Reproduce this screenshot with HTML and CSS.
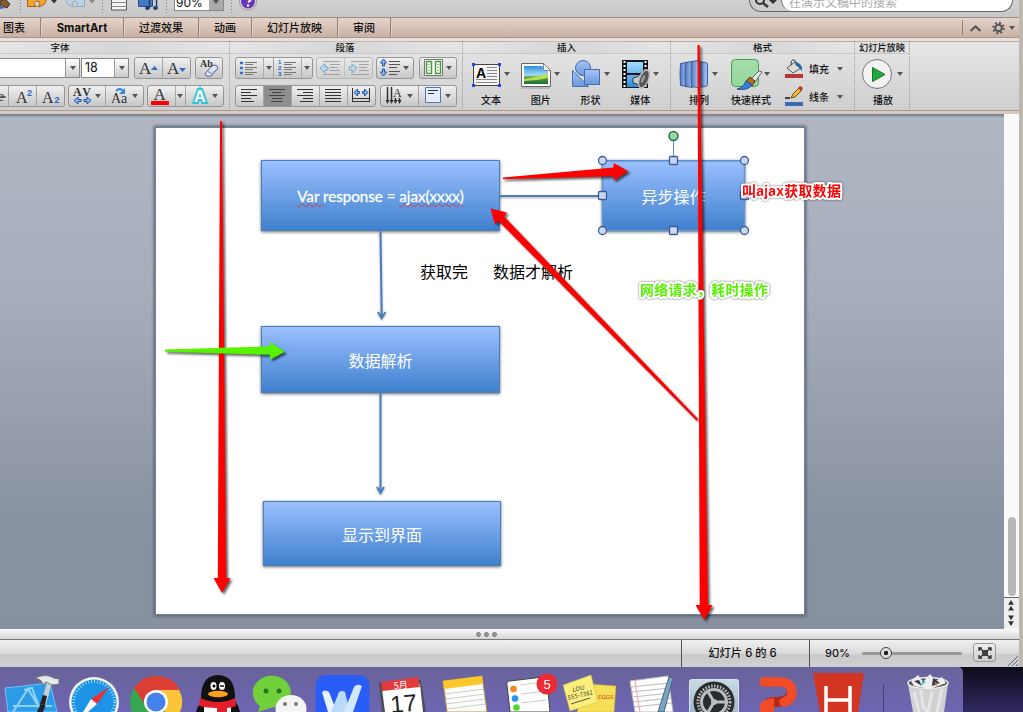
FILE: index.html
```html
<!DOCTYPE html>
<html lang="zh-CN">
<head>
<meta charset="utf-8">
<title>演示文稿</title>
<link rel="stylesheet" href="styles.css">
</head>
<body>
<svg class="defs" width="0" height="0">
  <defs>
    <linearGradient id="blue" x1="0" y1="0" x2="0" y2="1"><stop offset="0" stop-color="#a5c4f5"/><stop offset="1" stop-color="#6b97dc"/></linearGradient>
    <linearGradient id="film" x1="0" y1="0" x2="0" y2="1"><stop offset="0" stop-color="#a5dcfa"/><stop offset="1" stop-color="#2d8ee0"/></linearGradient>
    <linearGradient id="sky" x1="0" y1="0" x2="0" y2="1"><stop offset="0" stop-color="#2a8ee0"/><stop offset=".5" stop-color="#a8dcf5"/><stop offset=".65" stop-color="#4a9a3c"/><stop offset="1" stop-color="#1f6f38"/></linearGradient>
    <linearGradient id="green" x1="0" y1="0" x2="0" y2="1"><stop offset="0" stop-color="#a5deaa"/><stop offset="1" stop-color="#92d79a"/></linearGradient>
    <linearGradient id="steel" x1="0" y1="0" x2="0" y2="1"><stop offset="0" stop-color="#c8dbe5"/><stop offset="1" stop-color="#8fa6b3"/></linearGradient>
    <linearGradient id="bars" x1="0" y1="0" x2="1" y2="0"><stop offset="0" stop-color="#4c74be"/><stop offset="1" stop-color="#a9c6f4"/></linearGradient>
  </defs>
</svg>
<div class="window">
  <div class="toolbar">
    <svg class="tools" width="174" height="17" viewBox="0 0 174 17">
      <path d="M0 1l5-2 5 5-3 4-7-3z" fill="#8a5a2a" stroke="#333"/><path d="M0 6l5 2-5 1z" fill="#3b61b5"/>
      <path d="M27.500-1v7.500h9l-3-3q3-4 5.500-2t-1 5.500q9-2 8-8z" fill="#f4a62a" stroke="#a95b10"/>
      <path d="M51 0h6l-3 3.500z" fill="#333"/>
      <path d="M84.500-1v7.500h-9l3-3q-3-4-5.500-2t1 5.500q-9-2-8-8z" fill="#bcd3e6" stroke="#8faabd"/>
      <path d="M89 0h6l-3 3.500z" fill="#888"/>
      <path d="M111.500-1h15v11h-15z" fill="#f4f4f4" stroke="#555"/><path d="M111 2.500h16M111 6.500h16" stroke="#888"/>
      <path d="M138.500-1h14v7.500h-14z" fill="#4379c4" stroke="#244a86"/><path d="M149.500-1v9m7-9v9" stroke="#23406f" stroke-width="1.500"/><ellipse cx="147.500" cy="8" rx="2.500" ry="2" fill="#23406f"/><ellipse cx="155.500" cy="8" rx="2.500" ry="2" fill="#23406f"/>
      <path d="M20.500 0v15M102.500 0v15M166.500 0v15" stroke="#888" stroke-dasharray="1 2"/>
    </svg>
    <div class="zoombox"><span class="zoomval">90%</span><span class="zoombtn"><i class="caret"></i></span></div>
    <svg class="help" width="38" height="17" viewBox="224 0 38 17"><path d="M231.500 0v15" stroke="#888" stroke-dasharray="1 2"/><circle cx="248" cy="1.500" r="8.500" fill="#ddd" stroke="#999"/><circle cx="248" cy="1.500" r="7" fill="#6a35bd"/><path d="M246-1q2-3 4-1t-2 4" stroke="#fff" stroke-width="2" fill="none"/><circle cx="248" cy="5.500" r="1.200" fill="#fff"/></svg>
    <div class="search"><svg width="31" height="12" viewBox="750 0 31 12"><circle cx="760" cy="0" r="4" fill="none" stroke="#333" stroke-width="2"/><path d="M763 3l5 4" stroke="#333" stroke-width="2.500"/><path d="M769 0h8l-4 4z" fill="#333"/></svg><span class="field">在演示文稿中的搜索</span></div>
  </div>
  <div class="tabs">
    <span class="tab t1">图表</span><span class="tab t2">SmartArt</span><span class="tab t3">过渡效果</span><span class="tab t4">动画</span><span class="tab t5">幻灯片放映</span><span class="tab t6">审阅</span>
    <svg class="tabtools" width="57" height="19" viewBox="962 18 57 19"><path d="M962.500 20v15" stroke="#907f77"/><path d="M970.500 31l5-4.500 5 4.500" fill="none" stroke="#555" stroke-width="2.200"/><circle cx="998.500" cy="28" r="3.300" fill="none" stroke="#555" stroke-width="2"/><circle cx="998.500" cy="28" r="5.200" fill="none" stroke="#555" stroke-width="2" stroke-dasharray="2 2.080"/><path d="M1009 26h6l-3 4z" fill="#555"/></svg>
  </div>
  <div class="ribbon">
    <div class="group font">
      <div class="title">字体</div>
      <div class="row">
        <div class="combo name"><span class="val"></span><span class="drop"><i class="caret"></i></span></div>
        <div class="combo size"><span class="val">18</span><span class="drop"><i class="caret"></i></span></div>
        <div class="seg g1">
          <span class="btn w28"><svg width="26" height="20" viewBox="0 0 26 20"><text class="serif" x="4" y="16" font-size="17">A</text><path d="M16 12h7l-3.500-4z" fill="#2e6ec7"/></svg></span>
          <span class="btn w28"><svg width="26" height="20" viewBox="0 0 26 20"><text class="serif" x="4" y="16" font-size="17">A</text><path d="M16 10h7l-3.500 4z" fill="#2e6ec7"/></svg></span>
        </div>
        <div class="seg g2"><span class="btn w28"><svg width="26" height="20" viewBox="0 0 26 20"><text class="serif" x="4" y="9" font-size="10" font-weight="bold">Ab</text><path d="M10 14.500l6-6.500q3-2 5 0t0 4l-6 6q-3 1-5-.5t0-3z" fill="#dfe5fa" stroke="#525b83"/><path d="M12 13.500l4 2.500 5-5" fill="none" stroke="#98a4d1" stroke-width="1.500"/></svg></span></div>
      </div>
      <div class="row second">
        <div class="seg flat"><span class="btn w9"><svg width="8" height="20" viewBox="0 0 8 20"><text class="serif" x="-2" y="15" font-size="14">e</text><path d="M0 11h6" stroke="#222"/></svg></span>
          <span class="btn w28"><svg width="26" height="20" viewBox="0 0 26 20"><text class="serif" x="7" y="17" font-size="16">A</text><text class="idx" x="18" y="10">2</text></svg></span>
          <span class="btn w28"><svg width="26" height="20" viewBox="0 0 26 20"><text class="serif" x="5" y="17" font-size="16">A</text><text class="idx" x="17.500" y="17">2</text></svg></span></div>
        <div class="seg g3">
          <span class="btn w38"><svg width="26" height="20" viewBox="0 0 26 20"><text class="serif" x="4" y="10" font-size="12" font-weight="bold" textLength="18">AV</text><path d="M5 14.500l4-3.500v2.500h3v2H9V18zM22 14.500L18 11v2.500h-3v2h3V18z" fill="#86b8f5" stroke="#2455a4"/></svg><i class="caret"></i></span>
          <span class="btn w38"><svg width="26" height="20" viewBox="0 0 26 20"><text class="serif" x="5" y="17" font-size="14">Aa</text><path d="M10 5q4-4 7 0" fill="none" stroke="#3985d6" stroke-width="2"/><path d="M19 2v6h-6z" fill="#3985d6"/></svg><i class="caret"></i></span>
        </div>
        <div class="seg g4">
          <span class="btn w28"><svg width="26" height="20" viewBox="0 0 26 20"><text class="serif" x="5.500" y="14" font-size="17">A</text><path d="M3 15h18v4H3z" fill="#f00"/></svg></span><span class="btn w10"><i class="caret"></i></span>
          <span class="btn w38"><svg width="26" height="20" viewBox="0 0 26 20"><text class="glow" x="8" y="16">A</text></svg><i class="caret"></i></span>
        </div>
      </div>
    </div>
    <div class="group para">
      <div class="title">段落</div>
      <div class="row">
        <div class="seg">
          <span class="btn w28"><svg width="26" height="20" viewBox="0 0 26 20"><path d="M4 5h3M4 10h3M4 15h3" stroke="#2e73d4" stroke-width="2.500"/><path d="M9 4.500h12M9 9.500h12M9 14.500h12M9 6.500h8M9 11.500h8M9 16.500h8" stroke="#777"/></svg></span><span class="btn w10"><i class="caret"></i></span>
          <span class="btn w28"><svg width="26" height="20" viewBox="0 0 26 20"><text class="nums" x="4" y="6">1</text><text class="nums" x="4" y="12">2</text><text class="nums" x="4" y="18">3</text><path d="M10 4.500h12M10 9.500h12M10 14.500h12M10 6.500h8M10 11.500h8M10 16.500h8" stroke="#777"/></svg></span><span class="btn w10"><i class="caret"></i></span>
        </div>
        <div class="seg g5 faded">
          <span class="btn w28"><svg width="26" height="20" viewBox="0 0 26 20"><path d="M3 10l5-4v3h3v3H8v3z" fill="#9fd6f7" stroke="#1f70b4"/><path d="M6 3.500h17M13 6.500h10M13 9.500h8M13 12.500h10M6 16.500h17" stroke="#666"/></svg></span>
          <span class="btn w28"><svg width="26" height="20" viewBox="0 0 26 20"><path d="M12 10L7 6v3H4v3h3v3z" fill="#9fd6f7" stroke="#1f70b4"/><path d="M6 3.500h18M14 6.500h10M14 9.500h8M14 12.500h10M6 16.500h18" stroke="#666"/></svg></span>
        </div>
        <div class="seg g6"><span class="btn w38"><svg width="26" height="20" viewBox="0 0 26 20"><path d="M6.500 1l3 4h-2v3h-2V5h-2zM6.500 18l3-4h-2v-3h-2v3h-2z" fill="#86b8f5" stroke="#2455a4"/><path d="M12 3.500h11M12 6.500h11M12 9.500h8M12 13.500h11M12 16.500h8" stroke="#555"/></svg><i class="caret"></i></span></div>
        <div class="seg g7"><span class="btn w38"><svg width="26" height="20" viewBox="0 0 26 20"><path d="M4.500 1.500h18v16h-18z" fill="#fff" stroke="#777"/><path d="M6.500 3.500h5v12h-5zM15.500 3.500h5v12h-5z" fill="#fff" stroke="#4a9c3b" stroke-width="1.500"/><path d="M8 6.500h2M8 9.500h2M8 12.500h2M17 6.500h2M17 9.500h2M17 12.500h2" stroke="#aaa"/></svg><i class="caret"></i></span></div>
      </div>
      <div class="row second">
        <div class="seg">
          <span class="btn w28"><svg width="26" height="20" viewBox="0 0 26 20"><path d="M5 3.500h16M5 6.500h10M5 9.500h16M5 12.500h10M5 15.500h13" stroke="#333"/></svg></span>
          <span class="btn w28 on"><svg width="26" height="20" viewBox="0 0 26 20"><path d="M5 3.500h16M8 6.500h10M5 9.500h16M8 12.500h10M7 15.500h12" stroke="#444"/></svg></span>
          <span class="btn w28"><svg width="26" height="20" viewBox="0 0 26 20"><path d="M5 3.500h16M11 6.500h10M5 9.500h16M11 12.500h10M8 15.500h13" stroke="#333"/></svg></span>
          <span class="btn w28"><svg width="26" height="20" viewBox="0 0 26 20"><path d="M5 3.500h16M5 6.500h16M5 9.500h16M5 12.500h16M5 15.500h16" stroke="#333"/></svg></span>
          <span class="btn w28"><svg width="26" height="20" viewBox="0 0 26 20"><path d="M4.500 2v14M21.500 2v14M5 12.500h16M5 15.500h16" stroke="#333"/><path d="M6 6.500L9.500 3v2.500h2v2h-2V10zM20 6.500L16.500 3v2.500h-2v2h2V10z" fill="#78adf0" stroke="#2455a4"/></svg></span>
        </div>
        <div class="seg g8">
          <span class="btn w38"><svg width="26" height="20" viewBox="0 0 26 20"><path d="M6.500 1v13M10.500 1v13M14.500 12v3M18.500 12v3" stroke="#333" stroke-width="1.500"/><path d="M4.500 14h4l-2 4zM8.500 14h4l-2 4zM12.500 14h4l-2 4zM16.500 14h4l-2 4z" fill="#333"/><text class="serif" x="12" y="11" font-size="12">A</text></svg><i class="caret"></i></span>
          <span class="btn w38"><svg width="26" height="20" viewBox="0 0 26 20"><path d="M6.500 1.500h15v15h-15z" fill="#e2edff" stroke="#5375b5"/><path d="M9 4.500h10M9 7.500h6" stroke="#333"/></svg><i class="caret"></i></span>
        </div>
      </div>
    </div>
    <div class="group insert">
      <div class="title">插入</div>
      <div class="bigs">
        <div class="big"><div class="pic"><svg width="32" height="34" viewBox="471 57 32 34"><path d="M473.500 64.500h26v21h-26z" fill="#f4f4f4" stroke="#444"/><text class="box-a" x="476" y="78">A</text><path d="M487 67.500h10M487 70.500h10M487 73.500h10M487 76.500h10M476 79.500h21M476 82.500h21" stroke="#888"/><path d="M472 63h3v3h-3zM498 63h3v3h-3zM472 84h3v3h-3zM498 84h3v3h-3z" fill="#2445ef"/></svg><i class="caret"></i></div><span>文本</span></div>
        <div class="big"><div class="pic"><svg width="32" height="34" viewBox="521 57 32 34"><path d="M521.500 63.500h22l7 7v16h-29z" fill="#fff" stroke="#666"/><path d="M524 66h18l6 6v12h-24z" fill="url(#sky)"/><path d="M524 79q12-2 24-5v4q-12 3-24 3z" fill="#b9dd4b"/><path d="M543.500 63.500v7h7z" fill="#eee" stroke="#888"/><path d="M521 88h29" stroke="#999"/></svg><i class="caret"></i></div><span>图片</span></div>
        <div class="big"><div class="pic"><svg width="32" height="34" viewBox="571 57 32 34"><path d="M572.500 70.500v16h16z" fill="url(#blue)" stroke="#446fae"/><circle cx="583" cy="68" r="7.500" fill="url(#blue)" stroke="#446fae"/><path d="M584.500 69.500h15v15h-15z" fill="url(#blue)" stroke="#446fae"/></svg><i class="caret"></i></div><span>形状</span></div>
        <div class="big"><div class="pic"><svg width="32" height="34" viewBox="621 57 32 34"><path d="M623 60h26v28h-26z" fill="#151515"/><path d="M628 62h16v11h-16zM628 75h16v12h-16z" fill="url(#film)"/><path d="M625.500 61v27M646.500 61v27" stroke="#fff" stroke-width="2" stroke-dasharray="2 2"/><path d="M634 78l4-1 8-7 2 1-5 17-5-4-4-1z" fill="#ccc" stroke="#333"/><ellipse cx="645" cy="79" rx="4.500" ry="9.500" transform="rotate(22 645 79)" fill="#555" stroke="#bbb" stroke-width="1.500"/><ellipse cx="644" cy="79" rx="1.500" ry="4" fill="#999" transform="rotate(22 644 79)"/></svg><i class="caret"></i></div><span>媒体</span></div>
      </div>
    </div>
    <div class="group format">
      <div class="title">格式</div>
      <div class="bigs">
        <div class="big arrange"><div class="pic"><svg width="32" height="34" viewBox="679 57 32 34"><g fill="url(#bars)" stroke="#3a5c9f"><path d="M680.500 63.500q-1 10 0 22l6 1v-24z"/><path d="M685.500 62.500q-1 11 0 24l7 1v-26z"/><path d="M691.500 61.500q-1 12 0 25l7 1v-27z"/><path d="M698.500 61.500l7 1q2 0 2 2v20q0 2-2 2l-7 1z"/></g></svg><i class="caret"></i></div><span>排列</span></div>
        <div class="big quick"><div class="pic"><svg width="33" height="34" viewBox="730 57 33 34"><rect x="731.500" y="59.500" width="27" height="27" rx="4" fill="url(#green)" stroke="#4a985a"/><path d="M751 79l8-8 3 1-7 10z" fill="#e8e8e8" stroke="#666"/><path d="M750 77l5 4-3 5-6-5z" fill="#b86a24" stroke="#573313"/><path d="M746 81l6 4q-4 6-15 4 6-1 9-8z" fill="#397fd8" stroke="#245087"/></svg><i class="caret"></i></div><span>快速样式</span></div>
        <div class="lines">
          <div class="line"><svg width="20" height="21" viewBox="785 58 20 21"><path d="M787 68l8-6 6 6-8 5z" fill="#ddd" stroke="#555"/><path d="M791 65q0-6 3-5t3 6" fill="none" stroke="#333"/><path d="M796 62q7 2 6 9l-3-3-4-4z" fill="#2469a7"/><path d="M785 74h18v4h-18z" fill="#b5383d"/></svg><span>填充</span><i class="caret"></i></div>
          <div class="line"><svg width="20" height="21" viewBox="785 86 20 21"><path d="M785 98h5" stroke="#111" stroke-width="1.500"/><path d="M791 98l2-4 6-6 3 2-7 7z" fill="#f3bb34" stroke="#704914"/><path d="M798 88l2-2 3 2-2 3z" fill="#c8292a"/><path d="M785 102h18v4h-18z" fill="#3f69b0"/></svg><span>线条</span><i class="caret"></i></div>
        </div>
      </div>
    </div>
    <div class="group show">
      <div class="title">幻灯片放映</div>
      <div class="bigs"><div class="big play"><div class="pic"><svg width="34" height="34" viewBox="861 57 34 34"><circle cx="877" cy="74" r="14.500" fill="#f2f2f2" stroke="#777"/><path d="M872.500 67.500v14l12.500-7z" fill="#25a83b" stroke="#14752a"/></svg><i class="caret"></i></div><span>播放</span></div></div>
    </div>
  </div>
  <div class="work">
    <div class="canvas">
      <div class="slide">
        <div class="node n1"><span><u>Var </u>response = <u>ajax(xxxx)</u></span></div>
        <div class="node n2">数据解析</div>
        <div class="node n3">显示到界面</div>
        <div class="node n4">异步操作</div>
        <div class="note first">获取完</div><div class="note next">数据才解析</div>
      </div>
    </div>
    <div class="scroll"><div class="thumb"></div><svg class="pager" width="15" height="31" viewBox="0 0 15 31"><path d="M4 7l3-5 3 5zM4 13l3-5 3 5zM4 18l3 5 3-5zM4 24l3 5 3-5z" fill="#333"/></svg></div>
  </div>
  <div class="splitter"><i></i><i></i><i></i></div>
  <div class="status"><span class="notes"></span><span class="pages">幻灯片 6 的 6</span><span class="pct">90%</span><span class="slider"><i></i></span><span class="fit"><svg width="16" height="14" viewBox="0 0 16 14"><path d="M5 4h6v6H5z" fill="#444"/><path d="M2 5V2h3M2 2l4 3M14 5V2h-3M14 2l-4 3M2 9v3h3M2 12l4-3M14 9v3h-3M14 12l-4-3" fill="none" stroke="#333" stroke-width="1.300"/></svg></span><svg class="grip" width="12" height="12" viewBox="0 0 12 12"><path d="M1 11L11 1M5 11l6-6M9 11l2-2" stroke="#666"/></svg></div>
</div>
<div class="desk">
<div class="dock">
  <svg width="64" height="45" viewBox="0 667 64 45"><path d="M5 688l45-5 7 29H8z" fill="#2c9ce9" stroke="#68c5fa"/><path d="M13 712l15-23 14 23M13 706h39M24 690l8-2 9 24" fill="none" stroke="#8dd3fb" stroke-width="2"/><path d="M41 703l5 1-3 8h-6z" fill="#222"/><path d="M41 704l6-22h5l-6 23z" fill="#c9d0d3"/><path d="M40 704l5 1 2-9-4-1z" fill="#222"/><path d="M35 678q11-5 19 0l5 1v5l-7 1-6-3-3 3q0-5-8-7z" fill="#e4e9ea" stroke="#777"/></svg>
  <svg width="60" height="45" viewBox="64 667 60 45"><circle cx="94" cy="702" r="25" fill="#f4f6f8"/><circle cx="94" cy="702" r="22.500" fill="#1d93e5"/><circle cx="94" cy="702" r="20.500" fill="none" stroke="#9bd9ff" stroke-width="3" stroke-dasharray="1 2"/><path d="M109 687l-12 17-6-5z" fill="#ed2f31"/><path d="M91 699l6 5-9 8h-5z" fill="#f7f7f7"/></svg>
  <svg width="64" height="45" viewBox="124 667 64 45"><circle cx="156" cy="702" r="26" fill="#36a852"/><path d="M134 688q8-12 22-12 17 0 24 14h-24q-10 1-12 13z" fill="#dc3d35"/><path d="M158 690h21q6 11 1 22h-15z" fill="#fbc439"/><circle cx="156" cy="702" r="12" fill="#fff"/><circle cx="156" cy="702" r="9.500" fill="#4582ec"/></svg>
  <svg width="59" height="45" viewBox="188 667 59 45"><path d="M201 702q-4 5-5 10h44q-1-6-5-11 1-26-17-26t-17 27z" fill="#111"/><path d="M204 707h27v5h-27z" fill="#fff"/><path d="M200 698q18 8 35 0l1 8q-5 2-9 2v4h-10v-4q-10 0-18-2z" fill="#e51e2c"/><ellipse cx="213.500" cy="686" rx="3" ry="4" fill="#fff"/><ellipse cx="222" cy="686" rx="3" ry="4" fill="#fff"/><circle cx="214" cy="686" r="1.500"/><path d="M220 686h4" stroke="#111" stroke-width="1.500"/><ellipse cx="218" cy="694" rx="10" ry="3.200" fill="#f9a21a"/></svg>
  <svg width="64" height="45" viewBox="247 667 64 45"><path d="M258 712l2-6a19 17 0 1 1 27-3z" fill="#72d13b"/><ellipse cx="291" cy="709" rx="15.500" ry="14" fill="#f4f4f4"/><g fill="#267325"><circle cx="266" cy="691" r="2.500"/><circle cx="279" cy="691" r="2.500"/></g><g fill="#777"><circle cx="285" cy="704" r="2"/><circle cx="296" cy="704" r="2"/></g></svg>
  <svg width="63" height="45" viewBox="311 667 63 45"><rect x="315.500" y="675" width="54" height="54" rx="10" fill="#2a5cf6"/><path d="M322 692q3-3 7 0l8 20h-9z" fill="#e7f3ff"/><path d="M339 692q3-2 6 0l5 20h-19z" fill="#b9daf8"/><path d="M354 687q3-4 8-1l-9 26h-9z" fill="#d3e8fc"/></svg>
  <svg width="60" height="45" viewBox="374 667 60 45"><path d="M379 683l38-5 4 3 5 31h-44z" fill="#4a4e57"/><path d="M382 689l38-5 3 28h-38z" fill="#fff"/><path d="M381 682l37-5 2 10-38 4z" fill="#e23b3b"/><text class="month" x="394" y="689" transform="rotate(-5 394 689)">5月</text><text class="day" x="391" y="713" transform="rotate(-5 391 713)">17</text></svg>
  <svg width="63" height="45" viewBox="434 667 63 45"><path d="M443 681l39-5 5 36h-40z" fill="#fdfdfb" stroke="#aa9448"/><path d="M443 681l39-5 1 8-39 5z" fill="#fdc62b"/><path d="M445 694l39-5M446 699l39-5M446 704l39-5M447 709l39-5" stroke="#ccc"/></svg>
  <svg width="60" height="45" viewBox="497 667 60 45"><path d="M507 685q-1-4 3-4l33-4q3 0 4 3l3 32h-40z" fill="#fff" stroke="#444"/><circle cx="513.500" cy="689" r="3.300" fill="#fa8325"/><circle cx="515" cy="698.500" r="3.300" fill="#2696f4"/><circle cx="516.500" cy="707.500" r="3.300" fill="#50d62d"/><path d="M520 685l23-3M521 694l24-3M521 703l25-3" stroke="#ccc"/><circle cx="547" cy="684" r="10.500" fill="#ed2934"/><text class="badge" x="547" y="688.500" text-anchor="middle">5</text></svg>
  <svg width="67" height="45" viewBox="557 667 67 45"><path d="M587 684l29 2-2 26h-37z" fill="#f6df54" stroke="#cdb43c" stroke-width=".5"/><path d="M563 685l28-10 7 27-28 9z" fill="#fbee7b" stroke="#c7ba47" stroke-width=".5"/><text class="hand" x="573" y="692" transform="rotate(-13 573 692)" font-size="5">LOU</text><text class="hand" x="568" y="700" transform="rotate(-13 568 700)" textLength="26" lengthAdjust="spacingAndGlyphs">555-7361</text><path d="M571 704l19-6" stroke="#555"/><text class="hand eggs" x="598" y="699">EGGS</text></svg>
  <svg width="60" height="45" viewBox="624 667 60 45"><path d="M630 681l38-5 5 36h-38z" fill="#fff" stroke="#bbb"/><path d="M631 687l38-4M632 692l37-4M633 697l37-4M633 702l38-4M634 707l37-4" stroke="#bbb"/><path d="M635 681l5 31" stroke="#f5a1a5"/><path d="M669 677l4 1-9 34h-6z" fill="#78a3c3" stroke="#45637b"/></svg>
  <svg width="61" height="45" viewBox="684 667 61 45"><rect x="689.500" y="679.500" width="49" height="49" rx="2" fill="url(#steel)" stroke="#d1e3ec"/><circle cx="714" cy="702" r="20.500" fill="#282c2e"/><circle cx="714" cy="702" r="16" fill="none" stroke="#b9bec0" stroke-width="3" stroke-dasharray="1.500 1.500"/><circle cx="714" cy="702" r="12.500" fill="none" stroke="#b9bec0" stroke-width="3"/><circle cx="714" cy="702" r="3" fill="#b9bec0"/><path d="M714 702h14M714 702l-7-12M714 702l-7 12" stroke="#b9bec0" stroke-width="3"/></svg>
  <svg width="60" height="45" viewBox="745 667 60 45"><path d="M766 712v-3q0-7 8-7 17 0 17-9" fill="none" stroke="#b52a14" stroke-width="10"/><path d="M764 682h16q12 0 12 11 0 7-8 9" fill="none" stroke="#f14b28" stroke-width="9.500" stroke-linecap="round"/><path d="M760 707q0-8 14-9v14h-14z" fill="#f14b28"/></svg>
  <svg width="67" height="45" viewBox="805 667 67 45"><path d="M813 673h51l-6 39h-38z" fill="#d23622"/><path d="M826 686v26M850 686v26M826 700h24" stroke="#fff" stroke-width="3.500"/></svg>
  <svg width="23" height="45" viewBox="872 667 23 45"><path d="M883.500 684v28" stroke="#47416f"/></svg>
  <svg width="68" height="45" viewBox="895 667 68 45"><path d="M908 684h40l-4 28h-31z" fill="#d2d2d4"/><path d="M914 692l5 20M921 690l2 17 5 5M932 692l-4 20M942 689l-5 23" stroke="#e6e6e8" stroke-width="3" fill="none"/><ellipse cx="928" cy="683" rx="20" ry="5.500" fill="#555" stroke="#eee" stroke-width="1.500"/><path d="M911 681l7-6 5 7 7-8 6 7 6-4 4 6-16 6-16-3z" fill="#eee"/><path d="M914 681l5-1 3 6zM933 678l7 5-8 3z" fill="#29394a"/><path d="M922 680l4 2-4 3z" fill="#46b7cf"/><path d="M934 682l4 1-2 3z" fill="#dd6241"/></svg>
</div>
</div>
<svg class="marks" width="1023" height="712" viewBox="0 0 1023 712">
  <g class="connectors" fill="none" stroke="#4a7ebb" stroke-width="2"><path d="M500 196h99M380.500 231.500l1.200 85M378 312l3.700 6 3.800-6M380.500 393v98M377 487l3.500 6 3.500-6"/></g>
  <path d="M602.500 161h142v69.500h-142z" fill="none" stroke="#6795cf" stroke-width="1.500"/>
  <path d="M673.500 140v18" stroke="#5b8acc"/>
  <circle cx="673.500" cy="136" r="4.500" fill="#98d6a7" stroke="#21713d" stroke-width="1.500"/>
  <g fill="#cbd8ec" stroke="#385b9f" stroke-width="1.300"><circle cx="602.500" cy="160.500" r="4"/><circle cx="744.500" cy="160.500" r="4"/><circle cx="602.500" cy="230.500" r="4"/><circle cx="744.500" cy="230.500" r="4"/><rect x="669.500" y="156.500" width="8" height="8" rx="1"/><rect x="669.500" y="226.500" width="8" height="8" rx="1"/><rect x="598.500" y="191.500" width="8" height="8" rx="1"/><rect x="740.500" y="191.500" width="8" height="8" rx="1"/></g>
  <g class="arrows" fill="#f00">
    <path d="M220 121h2l4.200 457h4.300L222 593l-8.500-15h4.300z"/>
    <path d="M697.500 45h2.200l8.300 560h4.500l-8.200 15-8.800-15h4.200z"/>
    <path d="M503 177.500l110.500-10v-4.500l15 8.200-15 9.500v-4.500l-110.500 3z"/>
    <path d="M490.500 208.500l16.500 4-3 4L698 419l-1.500 1.500L498.500 221l-3.500 3.500z"/>
    <path d="M165 349.500l105-3.200V342l15 9.800-15 8v-5l-105-3z" fill="#56f200"/>
  </g>
  <text class="label red" x="742" y="196" textLength="99">叫ajax获取数据</text>
  <text class="label green" x="640" y="295" textLength="128">网络请求，耗时操作</text>
</svg>
</body>
</html>
```
FILE: styles.css
```css
* { box-sizing: border-box; }
body { margin: 0; width: 1023px; height: 712px; overflow: hidden; position: relative; background: #bdb8ae; font-family: Inter, "Noto Sans CJK SC", sans-serif; color: #111; }
svg { display: block; flex: none; }
.defs { position: absolute; }
.window { width: 1019px; height: 667px; display: flex; flex-direction: column; background: #d3d3d3; }
.toolbar { height: 17px; display: flex; align-items: flex-start; overflow: hidden; background: linear-gradient(#d1d1d1, #c7c7c7); }
.zoombox { width: 50px; height: 11px; display: flex; border: 1px solid #888; border-top: 0; background: #fff; font-size: 12px; line-height: 5px; }
.zoomval { width: 34px; padding-left: 1px; }
.zoombtn { flex: 1; display: flex; justify-content: center; background: #aaa; }
.caret { width: 0; height: 0; flex: none; border: 3px solid transparent; border-top: 4px solid #555; border-bottom: 0; }
.search { width: 264px; height: 12px; margin-left: 487px; display: flex; overflow: hidden; border: 1px solid #666; border-top: 0; border-radius: 0 0 14px 14px; background: #ccc; }
.field { flex: 1; border-left: 1px solid #777; border-radius: 0 0 12px 12px; padding-left: 7px; background: #fff; color: #aaa; font-size: 12px; line-height: 6px; }
.tabs { height: 21px; display: flex; border-top: 1px solid #9a8d87; border-bottom: 1px solid #a69389; background: linear-gradient(#e5d3ca, #c8b1a5); }
.tab { border-right: 1px solid #958077; font-size: 11px; font-weight: 500; line-height: 20px; text-align: center; box-shadow: 1px 0 #e1cec4; }
.t1 { width: 41px; padding-right: 12px; }
.t2 { width: 83px; font-weight: 700; font-size: 11.300px; }
.t3 { width: 75px; }
.t4 { width: 53px; }
.t5 { width: 86px; }
.t6 { width: 53px; }
.tabtools { margin-left: auto; }
.ribbon { height: 76px; display: flex; border-top: 3px solid #eadfd9; border-bottom: 3px solid #d9c8bf; background: linear-gradient(#e7e7e7, #cecece); box-shadow: inset 0 1px #b8a9a0, inset 0 -1px #aa9e97; }
.group { height: 70px; border-right: 1px dotted #999; }
.title { height: 13px; text-align: center; font-size: 9.500px; line-height: 14px; font-weight: 500; background: linear-gradient(90deg, transparent, #cdcdcd99, transparent); border-bottom: 1px solid #c6c6c6; white-space: nowrap; }
.font { width: 230px; }
.font .title { padding-right: 109px; }
.para { width: 233px; padding: 0; }
.para .title { padding-right: 2px; }
.insert { width: 208px; }
.format { width: 184px; }
.show { width: 55px; }
.show .title { font-size: 9.200px; }
.row { display: flex; margin-top: 3px; height: 22px; }
.second { margin-top: 6px; }
.para .row { padding-left: 5px; }
.seg { display: flex; height: 22px; border: 1px solid #969696; border-radius: 3px; background: linear-gradient(#f0f0f0, #c7c7c7); }
.btn { display: flex; align-items: center; overflow: hidden; border-right: 1px solid #a3a3a3; }
.btn:last-child { border-right: 0; }
.w28 { width: 28px; }
.w28:last-child { width: 27px; }
.w38 { width: 38px; }
.w10 { width: 10px; justify-content: center; }
.w28:has(+ .w10) { border-right: 1px solid #aaa; }
.w9 { width: 9px; }
.on { background: #8e8e8e; }
.combo { display: flex; border: 1px solid #888; background: #fff; height: 20px; margin-top: 1px; }
.name { width: 80px; border-left: 0; }
.size { width: 48px; margin-left: 1px; }
.val { flex: 1; padding-left: 3px; font-size: 12.500px; line-height: 18px; }
.drop { width: 14px; border-left: 1px solid #999; background: linear-gradient(#fff, #ccc); display: flex; align-items: center; justify-content: center; }
.g1 { width: 57px; margin-left: 5px; }
.g2 { width: 28px; margin-left: 4px; }
.flat { width: 65px; border-left: 0; border-radius: 0 3px 3px 0; }
.g3 { width: 76px; margin-left: 3px; }
.g4 { width: 77px; margin-left: 3px; }
.g5 { width: 57px; margin-left: 3px; }
.g6 { width: 38px; margin-left: 3px; }
.g7 { width: 38px; margin-left: 5px; }
.g8 { width: 77px; margin-left: 4px; }
.faded { opacity: .5; }
.serif { font-family: "Liberation Serif", serif; fill: #333; }
.idx { font: bold 9px "Liberation Sans", sans-serif; fill: #2767c4; }
.glow { font: bold 16px "Liberation Sans", sans-serif; fill: #fff; stroke: #35c3d6; stroke-width: 4px; paint-order: stroke; }
.nums { font: bold 6px "Liberation Sans", sans-serif; fill: #2464bb; }
.bigs { display: flex; margin-top: 3px; }
.insert .bigs { padding-left: 8px; }
.big { width: 50px; height: 52px; }
.pic { display: flex; align-items: center; height: 34px; }
.pic .caret { margin-left: 1px; }
.big > span { display: block; width: 40px; text-align: center; font-size: 10px; line-height: 19px; font-weight: 500; white-space: nowrap; }
.box-a { font: bold 14px "Liberation Sans", sans-serif; }
.format .bigs { padding-left: 8px; }
.arrange { width: 51px; }
.quick { width: 55px; }
.quick > span { width: 42px; }
.lines { display: flex; flex-direction: column; gap: 7px; margin-top: 1px; }
.line { display: flex; align-items: center; height: 21px; font-size: 10px; font-weight: 500; }
.line > span { margin-left: 4px; width: 28px; line-height: 20px; }
.show .bigs { padding-left: 6px; }
.play > span { width: 44px; }
.play { width: 48px; }
.play .caret { margin-left: 2px; }
.work { height: 515px; display: flex; }
.canvas { width: 1004px; height: 515px; padding: 13px 0 0 155px; background: linear-gradient(#707782, #b0b6c2 4px, #a6adba 35%, #8992a2 80%, #87909f); }
.slide { position: relative; width: 650px; height: 488px; background: #fff; border: 1px solid #7c8492; box-shadow: 0 0 3px 1px #4f5a6e; }
.node { position: absolute; display: flex; align-items: center; justify-content: center; color: #fff; font: 16px "Noto Sans CJK SC", sans-serif; background: linear-gradient(#9bc0ff, #3f80cd); border: 1px solid #4a7ebb; box-shadow: 0 1px 3px #0009; }
.n1 { left: 105px; top: 32px; width: 239px; height: 71px; font-family: Lato, sans-serif; font-size: 15.150px; -webkit-text-stroke: .3px #fff; }
.n2 { left: 105px; top: 198px; width: 239px; height: 67px; }
.n3 { left: 107px; top: 373px; width: 238px; height: 65px; }
.n4 { left: 446px; top: 32px; width: 143px; height: 71px; }
.n1 u { text-decoration: underline wavy #d93442 1px; text-underline-offset: 1px; text-decoration-skip-ink: none; }
.note { position: absolute; font: 16px/24px "Noto Sans CJK SC", sans-serif; color: #000; top: 131px; white-space: nowrap; }
.first { left: 264px; }
.next { left: 337px; }
.scroll { width: 15px; height: 515px; padding-top: 403px; background: #fafafa; }
.thumb { width: 8px; height: 79px; margin-left: 4px; border-radius: 4px; background: #b8b8b8; }
.pager { margin-top: 1px; border-top: 1px solid #666; background: #eee; }
.splitter { height: 10px; display: flex; gap: 3px; align-items: center; justify-content: center; padding-right: 46px; background: linear-gradient(#fafafa, #d6d6d6); }
.splitter i { width: 5px; height: 5px; border-radius: 50%; background: #999; border: 1px solid #777; }
.status { height: 28px; display: flex; align-items: center; border-top: 1px solid #777; background: linear-gradient(#f1f1f1, #d9d9d9 50%, #c9c9cb 51%, #d0d0d2); font-size: 11px; font-weight: 500; }
.notes { width: 682px; height: 27px; border-right: 1px solid #555; }
.pages { width: 128px; height: 27px; line-height: 26px; border-right: 1px solid #555; text-align: center; padding-right: 6px; font-size: 11.300px; }
.pct { width: 52px; padding: 0 0 2px 15px; }
.slider { width: 100px; height: 3px; margin-bottom: 1px; border-radius: 2px; background: #999; display: flex; align-items: center; padding-left: 18px; }
.slider i { width: 12px; height: 12px; border: 1px solid #444; border-radius: 50%; background: radial-gradient(circle, #222 2px, #ddd 2.500px); }
.fit { width: 23px; height: 19px; margin: 0 0 2px 11px; border: 1px solid #999; border-radius: 3px; display: flex; align-items: center; justify-content: center; background: linear-gradient(#eee, #ccc); }
.grip { margin: 14px 0 0 11px; }
.desk { height: 45px; background: linear-gradient(#0c0b18, #302a61); }
.dock { width: 963px; height: 45px; display: flex; background: linear-gradient(#69639a, #6e65b3); border-radius: 0 5px 0 0; }
.month { font: 9px "Noto Sans CJK SC", sans-serif; fill: #fff; }
.day { font: 300 24px "Liberation Sans", sans-serif; fill: #222; }
.badge { font: 13px "Liberation Sans", sans-serif; fill: #fff; }
.hand { font-family: "DejaVu Sans", sans-serif; font-style: italic; font-size: 6px; fill: #444; }
.hand.eggs { fill: #d72b1d; font-size: 5.500px; }
.marks { position: absolute; inset: 0; pointer-events: none; }
.connectors { filter: drop-shadow(0 1px 1px #0005); }
.arrows { filter: drop-shadow(2px 2px 1px #0009); }
.label { font: bold 14px "Liberation Sans", "Noto Sans CJK SC", sans-serif; stroke: #fff; stroke-width: 4px; stroke-linejoin: round; paint-order: stroke; filter: drop-shadow(0 0 1px #0009); }
.red { fill: #f00; }
.green { fill: #56f200; }
```
